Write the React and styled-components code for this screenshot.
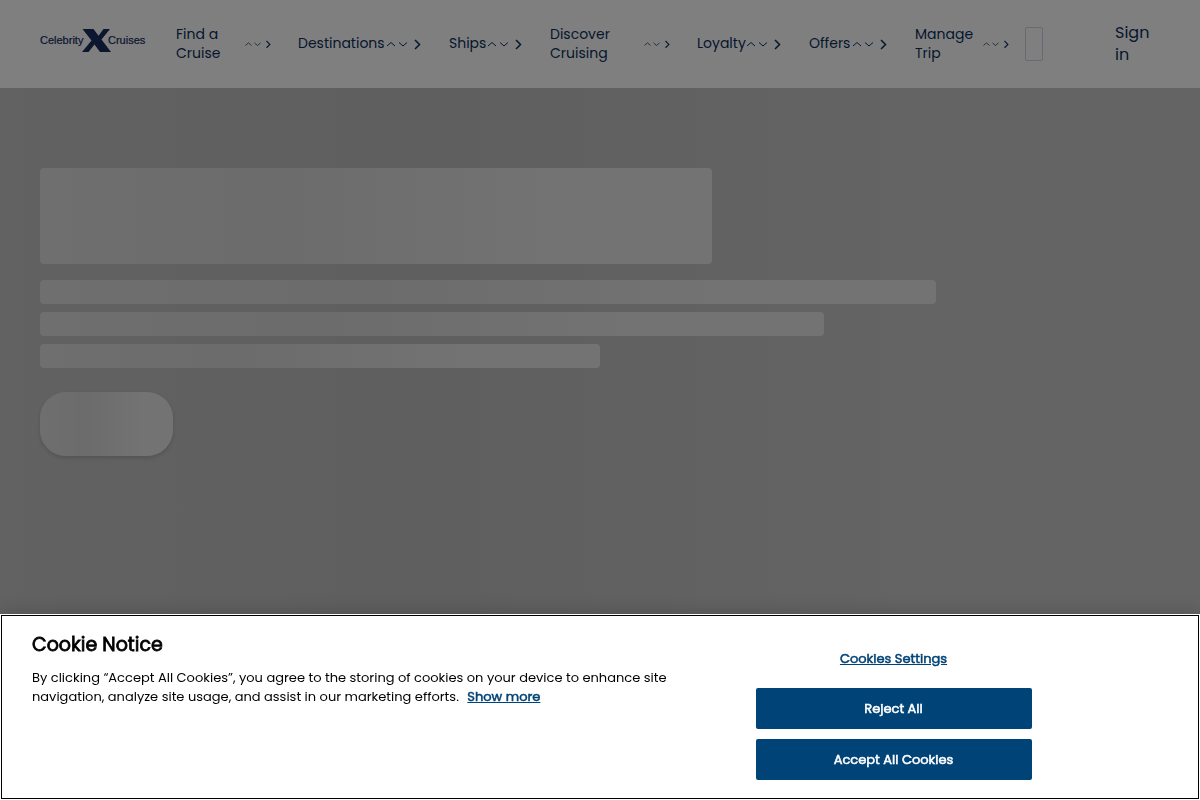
import React from "react";
import styled, { createGlobalStyle } from "styled-components";

const navItems = [
  { label: "Find a Cruise", width: 68, compact: true },
  { label: "Destinations", width: 87 },
  { label: "Ships", width: 37 },
  { label: "Discover Cruising", width: 93, compact: true },
  { label: "Loyalty", width: 48 },
  { label: "Offers", width: 42 },
  { label: "Manage Trip", width: 67, compact: true },
];

function Logo() {
  return (
    <svg width="108" height="24" viewBox="0 0 108 24" aria-label="Celebrity Cruises">
      <text x="0" y="15">Celebrity</text>
      <path d="M42.500 0h11l5 6.800L63.500 0H70l-8.500 10.500L71 23H60l-5.500-7.500L48.500 23H42l9.500-11.500z" />
      <text x="68" y="15">Cruises</text>
    </svg>
  );
}

function NavItem({ label, width, compact }) {
  return (
    <NavButton type="button">
      <NavLabel $width={width}>{label}</NavLabel>
      <Arrow $compact={compact} viewBox="0 0 12 12">
        <path d="M2 8l4-3.500L10 8" />
      </Arrow>
      <Arrow $compact={compact} viewBox="0 0 12 12">
        <path d="M2 4.500L6 8l4-3.500" />
      </Arrow>
      <ArrowRight $compact={compact} viewBox="0 0 16 16">
        <path d="M6 4l4.500 4.500L6 13" />
      </ArrowRight>
    </NavButton>
  );
}

export default function App() {
  return (
    <>
      <GlobalStyle />
      <Header>
        <LogoLink href="#">
          <Logo />
        </LogoLink>
        <Nav>
          {navItems.map((item) => (
            <NavItem key={item.label} {...item} />
          ))}
        </Nav>
        <SearchButton type="button" aria-label="Search" />
        <SignIn href="#">Sign in</SignIn>
      </Header>
      <Hero>
        <SkeletonTitle />
        <SkeletonLine $width="80%" />
        <SkeletonLine $width="70%" />
        <SkeletonLine $width="50%" />
        <SkeletonButton />
      </Hero>
      <Overlay />
      <CookieBanner role="dialog" aria-label="Cookie Notice">
        <CookieText>
          <h2>Cookie Notice</h2>
          <p>
            By clicking “Accept All Cookies”, you agree to the storing of cookies on your device to enhance site
            navigation, analyze site usage, and assist in our marketing efforts. <ShowMore href="#">Show more</ShowMore>
          </p>
        </CookieText>
        <CookieActions>
          <SettingsButton type="button">Cookies Settings</SettingsButton>
          <CookieButton type="button">Reject All</CookieButton>
          <CookieButton type="button">Accept All Cookies</CookieButton>
        </CookieActions>
      </CookieBanner>
    </>
  );
}

const GlobalStyle = createGlobalStyle`
  * {
    box-sizing: border-box;
  }
  body {
    margin: 0;
    background: #c6c6c6;
    font-family: Poppins, Inter, sans-serif;
    overflow: hidden;
  }
  button {
    font-family: inherit;
    cursor: pointer;
  }
`;

const Header = styled.header`
  display: flex;
  align-items: center;
  height: 88px;
  padding: 0 40px;
  background: #fff;
`;

const LogoLink = styled.a`
  display: flex;
  flex-shrink: 0;
  width: 136px;
  padding-bottom: 6px;
  svg {
    fill: #1a2c5e;
    font-family: "Liberation Sans", sans-serif;
    font-size: 11px;
  }
  text {
    stroke: #1a2c5e;
    stroke-width: 0.02em;
  }
`;

const Nav = styled.nav`
  display: flex;
  align-items: center;
  gap: 24px;
  padding-bottom: 1px;
`;

const NavButton = styled.button`
  display: flex;
  align-items: center;
  padding: 0;
  border: 0;
  background: none;
  color: #0c2f5c;
  font-size: 14px;
  line-height: 19px;
  text-align: left;
`;

const NavLabel = styled.span`
  width: ${({ $width }) => $width}px;
`;

const Arrow = styled.svg`
  width: ${({ $compact }) => ($compact ? 9 : 12)}px;
  height: 12px;
  fill: none;
  stroke: #0c2f5c;
`;

const ArrowRight = styled(Arrow)`
  width: ${({ $compact }) => ($compact ? 12 : 16)}px;
  height: 16px;
  stroke-width: 1.5;
`;

const SearchButton = styled.button`
  width: 18px;
  height: 34px;
  margin-left: 13px;
  padding: 0;
  border: 1px solid #d3d3e6;
  border-radius: 2px;
  background: none;
`;

const SignIn = styled.a`
  width: 45px;
  margin-left: auto;
  color: #0c2f5c;
  font-size: 16px;
  line-height: 22px;
  text-decoration: none;
`;

const Hero = styled.main`
  display: flex;
  flex-direction: column;
  gap: 8px;
  min-height: calc(100vh - 88px);
  padding: 80px 40px;
  background: linear-gradient(90deg, #c4c4c4 0%, #bebebe 35%, #c8c8c8 75%);
`;

const Skeleton = styled.div`
  height: 24px;
  border-radius: 4px;
  background: linear-gradient(90deg, #dedede 0%, #d8d8d8 35%, #e6e6e6 75%);
`;

const SkeletonTitle = styled(Skeleton)`
  width: 60%;
  height: 96px;
  margin-bottom: 8px;
`;

const SkeletonLine = styled(Skeleton)`
  width: ${({ $width }) => $width};
`;

const SkeletonButton = styled(Skeleton)`
  width: 133px;
  height: 64px;
  margin-top: 16px;
  border-radius: 26px;
  box-shadow: 0 2px 4px rgba(0, 0, 0, 0.15);
`;

const Overlay = styled.div`
  position: fixed;
  inset: 0;
  background: rgba(0, 0, 0, 0.5);
`;

const CookieBanner = styled.section`
  position: fixed;
  right: 0;
  bottom: 0;
  left: 0;
  display: flex;
  min-height: 186px;
  padding: 20px 32px;
  background: #fff;
  outline: 1px solid #000;
  outline-offset: -2px;
  box-shadow: 0 0 18px rgba(0, 0, 0, 0.2);
`;

const CookieText = styled.div`
  width: 57%;
  h2 {
    margin: 0 0 12px;
    font-size: 19px;
    font-weight: 400;
    line-height: 22px;
    -webkit-text-stroke: 0.04em;
  }
  p {
    margin: 0;
    font-size: 13px;
    line-height: 19px;
  }
`;

const ShowMore = styled.a`
  margin-left: 5px;
  color: #004376;
  -webkit-text-stroke: 0.04em;
`;

const CookieActions = styled.div`
  display: flex;
  flex-direction: column;
  justify-content: flex-end;
  gap: 10px;
  width: 276px;
  margin-left: 76px;
`;

const CookieButton = styled.button`
  height: 41px;
  border: 0;
  border-radius: 2px;
  background: #004376;
  color: #fff;
  font-size: 13px;
  -webkit-text-stroke: 0.04em;
`;

const SettingsButton = styled(CookieButton)`
  height: 39px;
  background: none;
  color: #004376;
  text-decoration: underline;
`;
